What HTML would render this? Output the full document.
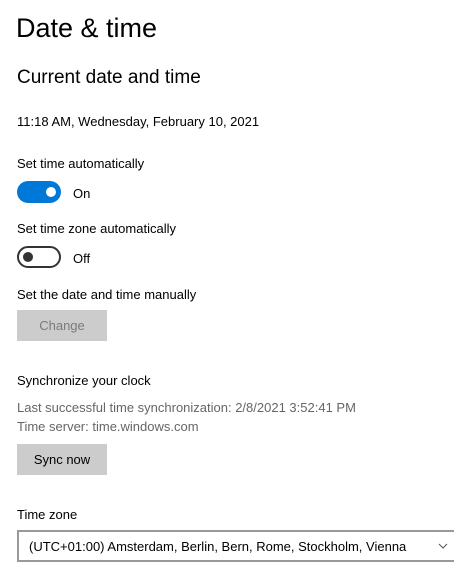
<!DOCTYPE html>
<html><head><meta charset="utf-8"><style>
html,body{margin:0;padding:0;background:#fff;width:454px;height:572px;overflow:hidden;font-family:"Liberation Sans",sans-serif;color:#000}
.a{position:absolute;white-space:nowrap}
.t{font-size:13px}
.btn{position:absolute;background:#ccc;font-size:13px;text-align:center;line-height:31px}
</style></head><body>
<div class="a" style="left:16px;top:13px;font-size:27px;font-weight:300">Date &amp; time</div>
<div class="a" style="left:17px;top:67px;font-size:19px">Current date and time</div>
<div class="a t" style="left:17px;top:114px">11:18 AM, Wednesday, February 10, 2021</div>
<div class="a t" style="left:17px;top:156px">Set time automatically</div>
<div class="a" style="left:17px;top:181px;width:44px;height:22px;border-radius:11px;background:#0078d7"></div>
<div class="a" style="left:46px;top:187px;width:10px;height:10px;border-radius:5px;background:#fff"></div>
<div class="a t" style="left:73px;top:186px">On</div>
<div class="a t" style="left:17px;top:221px">Set time zone automatically</div>
<div class="a" style="left:17px;top:246px;width:40px;height:18px;border-radius:11px;border:2px solid #333"></div>
<div class="a" style="left:23px;top:252px;width:10px;height:10px;border-radius:5px;background:#333"></div>
<div class="a t" style="left:73px;top:251px">Off</div>
<div class="a t" style="left:17px;top:287px">Set the date and time manually</div>
<div class="btn" style="left:17px;top:310px;width:90px;height:31px;color:#7a7a7a">Change</div>
<div class="a t" style="left:17px;top:373px">Synchronize your clock</div>
<div class="a t" style="left:17px;top:400px;color:#666">Last successful time synchronization: 2/8/2021 3:52:41 PM</div>
<div class="a t" style="left:17px;top:419px;color:#666">Time server: time.windows.com</div>
<div class="btn" style="left:17px;top:444px;width:90px;height:31px;color:#000">Sync now</div>
<div class="a t" style="left:17px;top:507px">Time zone</div>
<div class="a" style="left:17px;top:530px;width:450px;height:32px;border:2px solid #999;box-sizing:border-box"></div>
<div class="a t" style="left:29px;top:539px">(UTC+01:00) Amsterdam, Berlin, Bern, Rome, Stockholm, Vienna</div>
<svg class="a" style="left:438px;top:543px" width="10" height="6"><path d="M1 1 L5 5 L9 1" stroke="#555" fill="none" stroke-width="1"/></svg>
</body></html>
